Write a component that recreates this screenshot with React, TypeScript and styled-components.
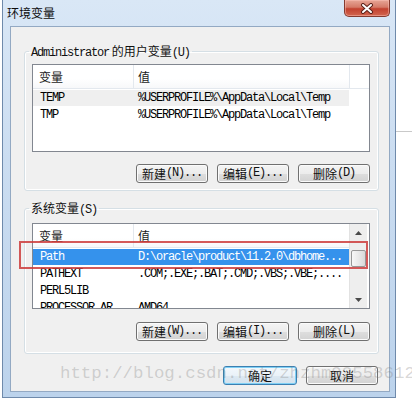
import * as React from 'react';
import styled, { createGlobalStyle, css } from 'styled-components';

const GlobalStyle = createGlobalStyle`
    html, body {
        margin: 0;
        padding: 0;
        background: #ffffff;
    }
    body {
        width: 412px;
        height: 398px;
        overflow: hidden;
        font-family: "Noto Sans CJK SC", "Liberation Sans", sans-serif;
        font-size: 12px;
        color: #000;
    }
`;

const Desktop = styled.div`
    display: flex;
    width: 412px;
    height: 398px;
    overflow: hidden;
    background: #ffffff;
`;

const BehindLine = styled.div`
    flex: 1;
    height: 0;
    margin-top: 131px;
    border-top: 1px solid #c9c9c9;
`;

const Window = styled.div`
    margin-left: 2px;
    width: 394px;
    height: 398px;
    flex-shrink: 0;
    box-sizing: border-box;
    display: flex;
    flex-direction: column;
    padding-bottom: 5px;
    background: linear-gradient(180deg, #d9e7f6 0%, #cbddf1 40%, #bcd3ec 100%);
    border-left: 1px solid #6f8aab;
    border-right: 1px solid #6f8aab;
    border-bottom: 1px solid #6f8aab;
`;

const TitleBar = styled.div`
    height: 26px;
    flex-shrink: 0;
    display: flex;
    justify-content: space-between;
    align-items: flex-start;
`;

const Title = styled.div`
    padding: 4px 0 0 4px;
    font-size: 12px;
    line-height: 17px;
    color: #0c0c0c;
`;

const CloseButton = styled.div`
    width: 46px;
    height: 17px;
    margin-right: 5px;
    box-sizing: border-box;
    display: flex;
    align-items: center;
    justify-content: center;
    border: 1px solid #843a2f;
    border-top: none;
    border-radius: 0 0 5px 5px;
    background: linear-gradient(180deg, #e7a697 0%, #d57a68 45%, #c2412f 55%, #d2664f 100%);
    box-shadow: inset 0 0 0 1px rgba(255, 200, 190, 0.45);
`;

const Client = styled.div`
    flex: 1;
    margin: 0 5px 0 7px;
    position: relative;
    display: flex;
    flex-direction: column;
    background: #f0f0f0;
    border: 1px solid #93a9c3;
`;

const Group = styled.fieldset<{ $top: number; $padTop: number; $padBottom: number }>`
    margin: ${(p) => p.$top}px 10px 0 13px;
    padding: ${(p) => p.$padTop}px 8px ${(p) => p.$padBottom}px 7px;
    min-width: 0;
    border: 1px solid #d5dfe5;
    border-radius: 3px;
    box-shadow: inset 0 0 0 1px #ffffff;
`;

const Legend = styled.legend`
    margin-left: -3px;
    padding: 0 2px;
    font-size: 12px;
    line-height: 14px;
    height: 14px;
    color: #111;
`;

const Code = styled.span`
    font-family: "Liberation Mono", "DejaVu Sans Mono", monospace;
    font-size: 12px;
    letter-spacing: -1.2px;
`;

const ListView = styled.div<{ $height: number }>`
    height: ${(p) => p.$height}px;
    display: flex;
    background: #ffffff;
    border: 1px solid #828790;
    overflow: hidden;
`;

const ListMain = styled.div`
    width: 316px;
    flex-shrink: 0;
    display: flex;
    flex-direction: column;
`;

const HeaderFiller = styled.div`
    flex: 1;
    height: 23px;
    border-left: 1px solid #e3e8ee;
    border-bottom: 1px solid #e3e8ee;
`;

const Columns = css`
    display: grid;
    grid-template-columns: 100px 216px;
`;

const HeaderRow = styled.div`
    ${Columns};
    height: 23px;
    flex-shrink: 0;
    border-bottom: 1px solid #e3e8ee;
    background: linear-gradient(180deg, #ffffff 0%, #ffffff 60%, #f7f8fa 100%);
`;

const HeaderCell = styled.div`
    padding: 3px 0 0 6px;
    font-size: 12px;
    line-height: 17px;
    color: #1a1a1a;
    & + & {
        border-left: 1px solid #e3e8ee;
        padding-left: 4px;
    }
`;

const Row = styled.div<{ $state?: 'focus' | 'dim' }>`
    ${Columns};
    height: 16px;
    flex-shrink: 0;
    margin-top: 1px;
    font-family: "Liberation Mono", "DejaVu Sans Mono", monospace;
    font-size: 12px;
    letter-spacing: -1.2px;
    line-height: 16px;
    white-space: nowrap;
    overflow: hidden;
    color: ${(p) => (p.$state === 'focus' ? '#ffffff' : '#000000')};
    background: ${(p) =>
        p.$state === 'focus' ? '#3592ec' : p.$state === 'dim' ? '#efefef' : 'transparent'};
`;

const Cell = styled.div`
    padding-left: 7px;
    overflow: hidden;
    & + & {
        padding-left: 5px;
    }
`;

const ScrollBar = styled.div`
    width: 17px;
    flex-shrink: 0;
    display: flex;
    flex-direction: column;
    background: #eeeeee;
    border-left: 1px solid #e2e2e2;
`;

const ScrollArrow = styled.div`
    height: 17px;
    flex-shrink: 0;
    display: flex;
    align-items: center;
    justify-content: center;
`;

const ScrollTrack = styled.div`
    flex: 1;
    padding-top: 9px;
    display: flex;
    flex-direction: column;
    align-items: center;
`;

const ScrollThumb = styled.div`
    width: 15px;
    height: 17px;
    box-sizing: border-box;
    border: 1px solid #979797;
    border-radius: 2px;
    background: linear-gradient(90deg, #f7f7f7 0%, #e9e9e9 50%, #d8d8d8 100%);
`;

const ButtonRow = styled.div<{ $top: number; $right?: number }>`
    display: flex;
    justify-content: flex-end;
    gap: 9px;
    margin-top: ${(p) => p.$top}px;
    padding-right: ${(p) => p.$right ?? 0}px;
`;

const Button = styled.div<{ $width?: number; $default?: boolean }>`
    width: ${(p) => p.$width ?? 72}px;
    height: 19px;
    box-sizing: border-box;
    display: flex;
    align-items: center;
    justify-content: center;
    font-size: 12px;
    line-height: 17px;
    white-space: nowrap;
    color: #111;
    border-radius: 3px;
    border: 1px solid ${(p) => (p.$default ? '#3c7fb1' : '#707070')};
    background: ${(p) =>
        p.$default
            ? 'linear-gradient(180deg, #f3f8fc 0%, #eaf2f8 50%, #dde9f2 51%, #d3e2ee 100%)'
            : 'linear-gradient(180deg, #f4f4f4 0%, #ececec 50%, #dedede 51%, #d2d2d2 100%)'};
    box-shadow: ${(p) =>
        p.$default ? 'inset 0 0 0 1px #7fd0f5' : 'inset 0 0 0 1px #fbfbfb'};
`;

const Highlight = styled.div`
    position: absolute;
    left: 8px;
    top: 214px;
    width: 349px;
    height: 28px;
    box-sizing: border-box;
    border: 2px solid rgba(205, 60, 60, 0.85);
    pointer-events: none;
`;

const Watermark = styled.div`
    position: absolute;
    left: 49px;
    top: 336px;
    font-family: "Liberation Mono", "DejaVu Sans Mono", monospace;
    font-size: 17.4px;
    line-height: 22px;
    white-space: nowrap;
    color: rgba(120, 120, 120, 0.3);
    pointer-events: none;
`;

const CloseGlyph = () => (
    <svg width="14" height="11" viewBox="0 0 14 11">
        <path d="M3 2 L11 9 M11 2 L3 9" stroke="#5b2119" strokeWidth="4" strokeLinecap="round" />
        <path d="M3 2 L11 9 M11 2 L3 9" stroke="#ffffff" strokeWidth="2" strokeLinecap="round" />
    </svg>
);

const Arrow = ({ up }: { up: boolean }) => (
    <svg width="7" height="4" viewBox="0 0 7 4">
        <path d={up ? 'M0 4 L3.5 0 L7 4 Z' : 'M0 0 L3.5 4 L7 0 Z'} fill="#4a4a4a" />
    </svg>
);

interface VarRow {
    name: string;
    value: string;
    state?: 'focus' | 'dim';
}

const userVars: VarRow[] = [
    { name: 'TEMP', value: '%USERPROFILE%\\AppData\\Local\\Temp', state: 'dim' },
    { name: 'TMP', value: '%USERPROFILE%\\AppData\\Local\\Temp' },
];

const systemVars: VarRow[] = [
    { name: 'Path', value: 'D:\\oracle\\product\\11.2.0\\dbhome...', state: 'focus' },
    { name: 'PATHEXT', value: '.COM;.EXE;.BAT;.CMD;.VBS;.VBE;....' },
    { name: 'PERL5LIB', value: '' },
    { name: 'PROCESSOR_AR', value: 'AMD64' },
];

const VarList: React.FunctionComponent<{ rows: VarRow[]; height: number; scroll?: boolean }> = ({
    rows,
    height,
    scroll,
}) => (
    <ListView $height={height}>
        <ListMain>
            <HeaderRow>
                <HeaderCell>变量</HeaderCell>
                <HeaderCell>值</HeaderCell>
            </HeaderRow>
            {rows.map((r) => (
                <Row key={r.name} $state={r.state}>
                    <Cell>{r.name}</Cell>
                    <Cell>{r.value}</Cell>
                </Row>
            ))}
        </ListMain>
        {scroll ? (
            <ScrollBar>
                <ScrollArrow>
                    <Arrow up />
                </ScrollArrow>
                <ScrollTrack>
                    <ScrollThumb />
                </ScrollTrack>
                <ScrollArrow>
                    <Arrow up={false} />
                </ScrollArrow>
            </ScrollBar>
        ) : (
            <HeaderFiller />
        )}
    </ListView>
);

const App: React.FunctionComponent = () => {
    return (
        <>
            <GlobalStyle />
            <Desktop>
                <Window>
                    <TitleBar>
                        <Title>环境变量</Title>
                        <CloseButton>
                            <CloseGlyph />
                        </CloseButton>
                    </TitleBar>
                    <Client>
                        <Group $top={17} $padTop={6} $padBottom={7}>
                            <Legend>
                                <Code>Administrator</Code> 的用户变量<Code>(U)</Code>
                            </Legend>
                            <VarList rows={userVars} height={86} />
                            <ButtonRow $top={12}>
                                <Button>新建<Code>(N)...</Code></Button>
                                <Button>编辑<Code>(E)...</Code></Button>
                                <Button>删除<Code>(D)</Code></Button>
                            </ButtonRow>
                        </Group>
                        <Group $top={10} $padTop={8} $padBottom={12}>
                            <Legend>
                                系统变量<Code>(S)</Code>
                            </Legend>
                            <VarList rows={systemVars} height={84} scroll />
                            <ButtonRow $top={13}>
                                <Button>新建<Code>(W)...</Code></Button>
                                <Button>编辑<Code>(I)...</Code></Button>
                                <Button>删除<Code>(L)</Code></Button>
                            </ButtonRow>
                        </Group>
                        <ButtonRow $top={12} $right={11}>
                            <Button $width={74} $default>确定</Button>
                            <Button $width={72}>取消</Button>
                        </ButtonRow>
                        <Highlight />
                        <Watermark>http://blog.csdn.net/zhzhm92558612</Watermark>
                    </Client>
                </Window>
                <BehindLine />
            </Desktop>
        </>
    );
};

export default App;
